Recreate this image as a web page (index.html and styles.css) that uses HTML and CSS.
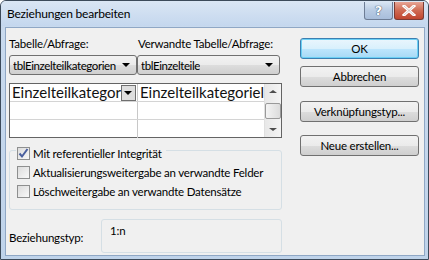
FILE: index.html
```html
<!DOCTYPE html>
<html lang="de">
<head>
    <meta charset="UTF-8">
    <title>Beziehungen bearbeiten</title>
    <link rel="stylesheet" href="styles.css">
</head>
<body>
    <div class="window">
        <div class="titlebar">
            <span class="title">Beziehungen bearbeiten</span>
            <div class="caption-buttons">
                <div class="cap-btn help">?</div>
                <div class="cap-btn close">
                    <svg width="14" height="11" viewBox="0 0 14 11"><path d="M2 1 L12 10 M12 1 L2 10" stroke="#fff" stroke-width="3" stroke-linecap="square"/><path d="M2 1 L12 10 M12 1 L2 10" stroke="#5a1a12" stroke-width="0.6" fill="none" opacity="0.4"/></svg>
                </div>
            </div>
        </div>
        <div class="client">
            <div class="left">
                <div class="labels">
                    <span class="lbl-a">Tabelle/Abfrage:</span>
                    <span>Verwandte Tabelle/Abfrage:</span>
                </div>
                <div class="combos">
                    <div class="combo combo-a"><span class="combo-text">tblEinzelteilkategorien</span><i class="arrow"></i></div>
                    <div class="combo combo-b"><span class="combo-text">tblEinzelteile</span><i class="arrow"></i></div>
                </div>
                <div class="grid">
                    <div class="cells">
                        <div class="row">
                            <div class="cell c1">Einzelteilkategor<span class="drop"><i class="arrow"></i></span></div>
                            <div class="cell c2">Einzelteilkategoriel</div>
                        </div>
                        <div class="row">
                            <div class="cell c1"></div>
                            <div class="cell c2"></div>
                        </div>
                        <div class="row">
                            <div class="cell c1"></div>
                            <div class="cell c2"></div>
                        </div>
                    </div>
                    <div class="scrollbar">
                        <div class="sb-arrow up"></div>
                        <div class="thumb"></div>
                        <div class="sb-arrow down"></div>
                    </div>
                </div>
                <div class="group">
                    <label class="check checked"><span class="box"><svg width="11" height="11" viewBox="0 0 11 11"><path d="M1.5 5.5 L4 8.5 L9.5 1" stroke="#4a5f9e" stroke-width="2" fill="none"/></svg></span>Mit referentieller Integrität</label>
                    <label class="check"><span class="box"></span>Aktualisierungsweitergabe an verwandte Felder</label>
                    <label class="check"><span class="box"></span>Löschweitergabe an verwandte Datensätze</label>
                </div>
                <div class="type-row">
                    <span class="type-label">Beziehungstyp:</span>
                    <div class="type-box">1:n</div>
                </div>
            </div>
            <div class="right">
                <button class="btn default">OK</button>
                <button class="btn">Abbrechen</button>
                <button class="btn gap">Verknüpfungstyp...</button>
                <button class="btn">Neue erstellen...</button>
            </div>
        </div>
    </div>
</body>
</html>
```

FILE: styles.css
```css
body {
    margin: 0;
    font-family: "Lato", "Noto Sans", sans-serif;
    font-size: 11.5px;
    letter-spacing: -0.2px;
    color: #000;
}
.window {
    width: 429px;
    height: 260px;
    box-sizing: border-box;
    border: 1px solid #3c4a5a;
    border-radius: 6px 6px 0 0;
    background: linear-gradient(#c2d5ec, #c9daee 30px, #bfd3ea);
    display: flex;
    flex-direction: column;
    white-space: nowrap;
}
.titlebar {
    height: 25px;
    display: flex;
    justify-content: space-between;
    align-items: flex-start;
    background: linear-gradient(#dae6f4, #c4d7ee);
    border-radius: 5px 5px 0 0;
}
.title {
    padding: 5px 0 0 6px;
    font-size: 12px;
}
.caption-buttons {
    display: flex;
    gap: 1px;
    margin: 1px 4px 0 0;
}
.cap-btn {
    width: 27px;
    height: 17px;
    border: 1px solid #6d7d95;
    border-top: none;
    border-radius: 0 0 3px 3px;
    display: flex;
    align-items: center;
    justify-content: center;
}
.help {
    background: linear-gradient(#d9e5f3, #b8cbe3 50%, #a8bedb);
    color: #fff;
    font-family: "DejaVu Sans", sans-serif;
    font-weight: bold;
    font-size: 13px;
    text-shadow: 0 0 1px #34455e, 0 0 1px #34455e;
}
.close {
    width: 28px;
    background: linear-gradient(#e7a596, #cf6a52 50%, #c0462f);
    border-color: #7a3a32;
}
.client {
    flex: 1;
    margin: 1px 3px 3px 4px;
    border: 1px solid #8fa7c5;
    background: #f0f0f0;
    display: flex;
    padding: 0 0 0 3px;
}
.left {
    width: 273px;
}
.labels {
    display: flex;
    margin-top: 8px;
    height: 16px;
    line-height: 16px;
}
.lbl-a {
    width: 129px;
}
.combos {
    display: flex;
    margin-top: 3px;
}
.combo {
    height: 20px;
    box-sizing: border-box;
    border: 1px solid #707070;
    border-radius: 3px;
    background: linear-gradient(#f2f2f2, #ebebeb 50%, #dddddd 51%, #cfcfcf);
    display: flex;
    align-items: center;
    justify-content: space-between;
    padding: 0 6px 0 3px;
}
.combo-text {
    letter-spacing: -0.4px;
    overflow: hidden;
}
.combo-a {
    width: 128px;
}
.combo-b {
    width: 143px;
}
.arrow {
    flex-shrink: 0;
    width: 0;
    height: 0;
    border-left: 4px solid transparent;
    border-right: 4px solid transparent;
    border-top: 4px solid #000;
}
.grid {
    margin-top: 8px;
    height: 55px;
    box-sizing: border-box;
    border: 1px solid #646464;
    background: #fff;
    display: flex;
}
.cells {
    flex: 1;
}
.row {
    display: flex;
    height: 18px;
    border-bottom: 1px solid #d4d4d4;
    box-sizing: border-box;
}
.row:last-child {
    border-bottom: none;
}
.cell {
    font-family: "Lato", sans-serif;
    font-size: 15px;
    letter-spacing: 0;
    line-height: 17px;
    padding-left: 2px;
    overflow: hidden;
    color: #111;
}
.c1 {
    width: 125px;
    border-right: 1px solid #c8c8c8;
    display: flex;
    justify-content: space-between;
}
.c2 {
    flex: 1;
}
.drop {
    width: 14px;
    height: 14px;
    margin: 1px 1px 0 0;
    border: 1px solid #6f6f6f;
    background: #dedede;
    display: flex;
    align-items: center;
    justify-content: center;
}
.scrollbar {
    width: 17px;
    background: linear-gradient(90deg, #e8e8e8, #f4f4f4);
    border-left: 1px solid #e0e0e0;
    display: flex;
    flex-direction: column;
    align-items: center;
    justify-content: space-between;
}
.sb-arrow {
    width: 0;
    height: 0;
    border-left: 4px solid transparent;
    border-right: 4px solid transparent;
    margin: 6px 0;
}
.up {
    border-bottom: 3px solid #4d4d4d;
}
.down {
    border-top: 3px solid #4d4d4d;
}
.thumb {
    width: 14px;
    height: 14px;
    border: 1px solid #9a9a9a;
    border-radius: 2px;
    background: linear-gradient(90deg, #f4f4f4, #dcdcdc);
}
.group {
    margin-top: 12px;
    height: 60px;
    box-sizing: border-box;
    border: 1px solid #d5dfe5;
    border-radius: 3px;
    padding: 0 0 0 7px;
    display: flex;
    flex-direction: column;
    align-items: flex-start;
}
.check {
    display: flex;
    align-items: center;
    height: 19px;
    gap: 3px;
}
.checked {
    margin-top: -7px;
    background: #f0f0f0;
    padding: 0 4px 0 1px;
    margin-left: -1px;
}
.box {
    width: 11px;
    height: 11px;
    border: 1px solid #8e8f8f;
    background: linear-gradient(135deg, #dcdcdc, #f8f8f8);
    display: flex;
}
.type-row {
    margin-top: 9px;
    display: flex;
    align-items: center;
}
.type-label {
    width: 92px;
    padding-top: 2px;
}
.type-box {
    width: 181px;
    height: 34px;
    box-sizing: border-box;
    border: 1px solid #d5dfe5;
    border-radius: 3px;
    padding: 4px 0 0 8px;
}
.right {
    margin-left: 18px;
    padding-top: 10px;
    display: flex;
    flex-direction: column;
}
.btn {
    width: 119px;
    height: 21px;
    margin-bottom: 7px;
    border: 1px solid #707070;
    border-radius: 3px;
    background: linear-gradient(#f2f2f2, #ebebeb 50%, #dddddd 51%, #cfcfcf);
    font-family: inherit;
    font-size: 11.5px;
    letter-spacing: -0.2px;
    padding: 0;
}
.default {
    border-color: #3c7fb1;
    background: linear-gradient(#eaf6fd, #d9f0fc 50%, #bee6fd 51%, #a7d9f5);
    box-shadow: inset 0 0 0 1px #6bd0f5;
}
.gap {
    margin-top: 7px;
}
.btn + .btn + .btn + .btn {
    margin-top: 6px;
}
```
